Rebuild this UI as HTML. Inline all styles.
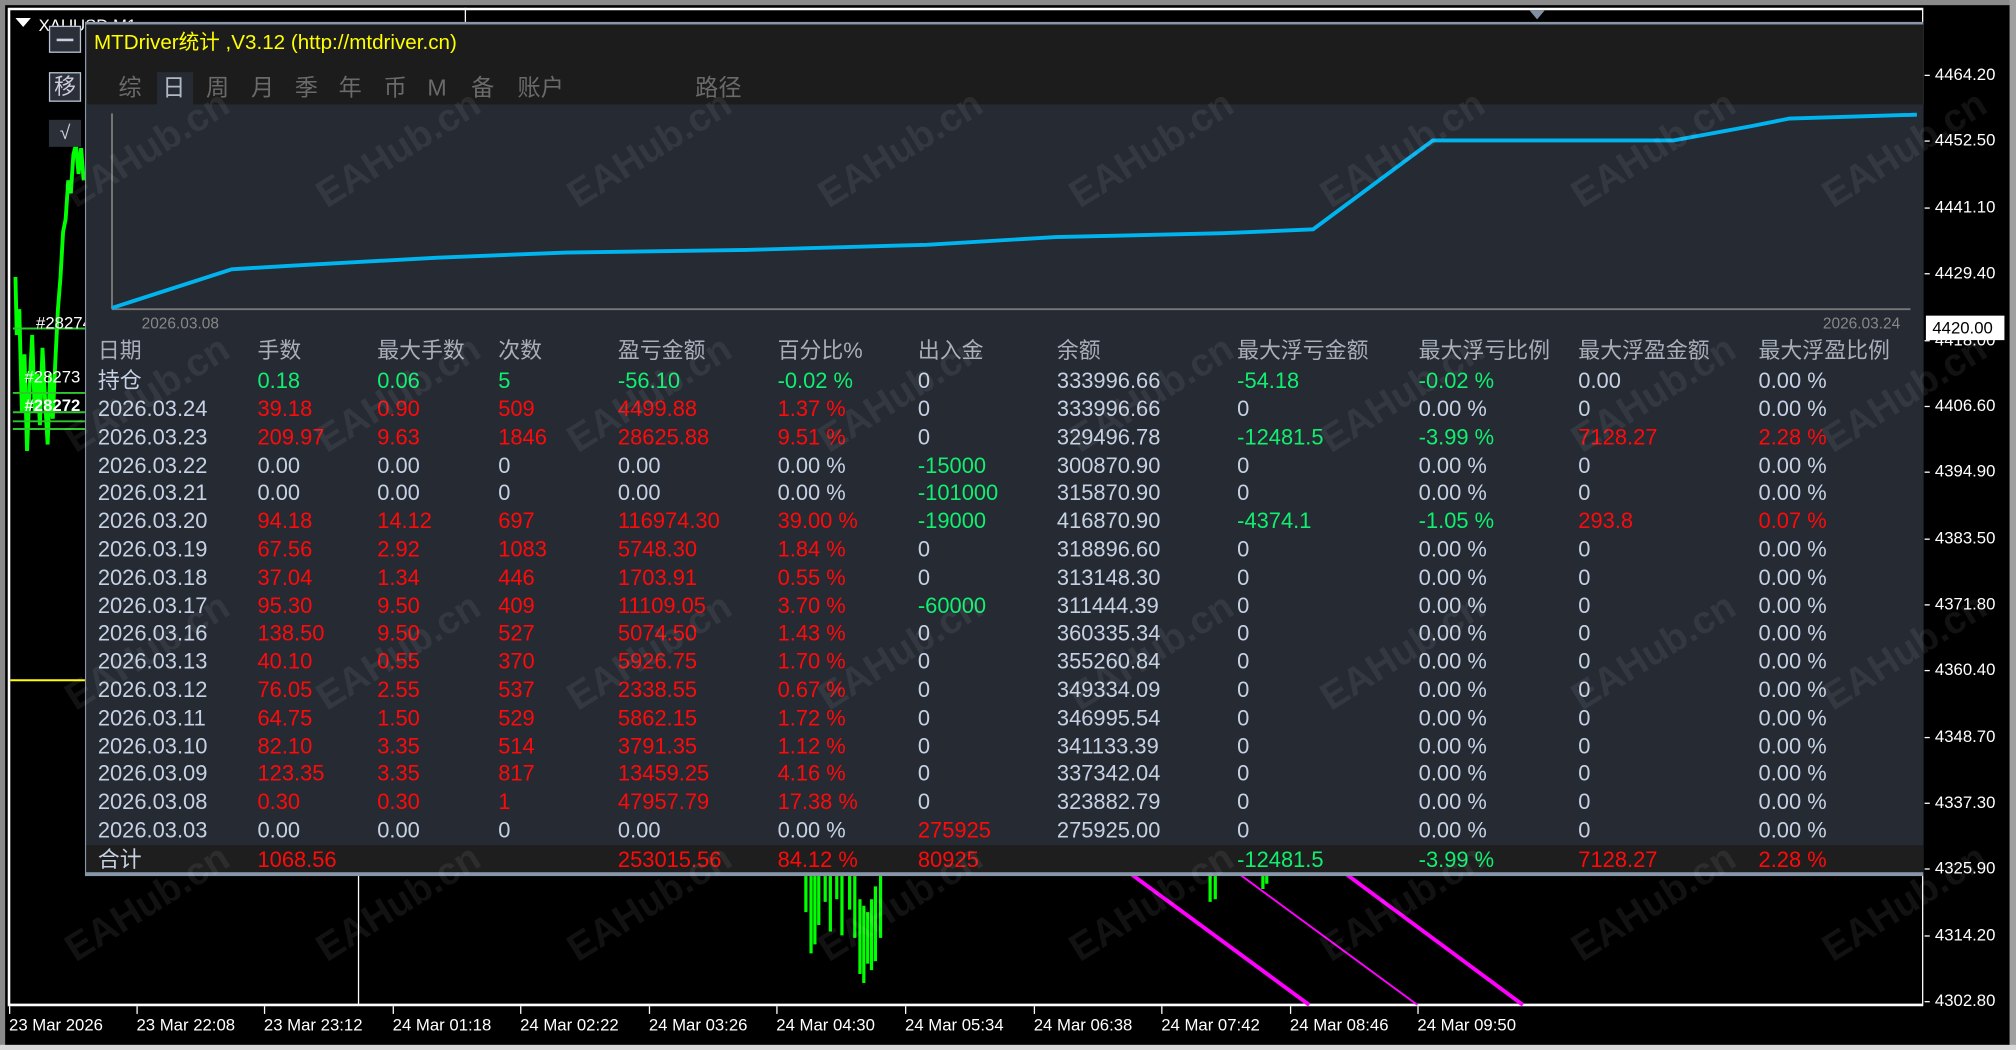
<!DOCTYPE html>
<html><head><meta charset="utf-8">
<style>
*{margin:0;padding:0;box-sizing:border-box}
html,body{width:2016px;height:1050px;overflow:hidden;background:#000}
#w{position:absolute;left:0;top:0;width:1566px;height:815px;transform-origin:0 0;transform:scale(1.28736,1.28834);background:#000;font-family:"Liberation Sans","Noto Sans CJK SC",sans-serif;overflow:hidden}
.a{position:absolute}
.t{position:absolute;white-space:nowrap;font-size:16px;line-height:18px}
.row{position:absolute;left:0;width:1427px;height:22px}
.row span{position:absolute;top:0;white-space:nowrap;font-size:17px;line-height:20px;color:#c6d2e4}
.r{color:#ff0a0a!important}.g{color:#10f070!important}.h{color:#a9afb8!important}
.c1{left:10px}.c2{left:134px}.c3{left:227px}.c4{left:321px}.c5{left:414px}.c6{left:538px}.c7{left:647px}.c8{left:755px}.c9{left:895px}.c10{left:1036px}.c11{left:1160px}.c12{left:1300px}
.px{position:absolute;left:1503px;color:#fff;font-size:13px;line-height:14px}
.px:before{content:"";position:absolute;left:-8px;top:7px;width:4px;height:1px;background:#fff}
.tm{position:absolute;top:789px;color:#fff;font-size:13px;line-height:14px}
.tk{position:absolute;top:781px;width:1px;height:6px;background:#fff}
.wm{position:absolute;color:rgba(255,255,255,0.07);font-size:30px;font-weight:bold;transform:rotate(-32deg);transform-origin:0 0;white-space:nowrap;pointer-events:none}
.tab{position:absolute;top:58px;color:#6a6a6a;font-size:18px;line-height:20px;white-space:nowrap}
</style></head><body><div id="w">
<div class="a" style="left:0;top:0;width:1566px;height:4px;background:#8a8a8a"></div>
<div class="a" style="left:0;top:0;width:4px;height:815px;background:#8a8a8a"></div>
<div class="a" style="left:1561px;top:0;width:5px;height:815px;background:#a0a0a0"></div>
<div class="a" style="left:0;top:811px;width:1566px;height:4px;background:#d8d8d8"></div>
<div class="a" style="left:6px;top:6px;width:1488px;height:775px;border:2px solid #fff;border-right-width:1px"></div>
<div class="a" style="left:361px;top:6px;width:1px;height:12px;background:#fff"></div>
<div class="a" style="left:278px;top:678px;width:1px;height:102px;background:#fff"></div>
<div class="a" style="left:1188px;top:8px;width:0;height:0;border-left:6px solid transparent;border-right:6px solid transparent;border-top:7px solid #8090a0"></div>
<svg class="a" style="left:0;top:0" width="70" height="560">
<polyline fill="none" stroke="#00ff00" stroke-width="3" points="12,215 13,260 15,240 17,320 19,275 21,350 23,300 25,260 27,320 29,290 31,330 33,270 35,310 37,345 39,290 41,325 43,280 45,240 47,215 49,180 51,170 53,140 55,150 57,120 59,112 61,135 63,115 65,140"/>
<line x1="10" y1="255" x2="66" y2="255" stroke="#2ec82e" stroke-width="1.5"/>
<line x1="10" y1="305" x2="66" y2="305" stroke="#2ec82e" stroke-width="1.5"/>
<line x1="10" y1="320" x2="66" y2="320" stroke="#2ec82e" stroke-width="1.5"/>
<line x1="10" y1="327" x2="66" y2="327" stroke="#2ec82e" stroke-width="1.5"/>
<line x1="10" y1="333" x2="66" y2="333" stroke="#2ec82e" stroke-width="1.5"/>
<line x1="8" y1="528" x2="66" y2="528" stroke="#ffff00" stroke-width="1.5"/>
</svg>
<div class="t" style="left:28px;top:242px;color:#fff;font-size:13px">#28274</div>
<div class="t" style="left:19px;top:284px;color:#fff;font-size:13px">#28273</div>
<div class="t" style="left:19px;top:306px;color:#fff;font-size:13px;font-weight:bold">#28272</div>
<div class="a" style="left:12px;top:14px;width:0;height:0;border-left:6px solid transparent;border-right:6px solid transparent;border-top:7px solid #fff"></div>
<div class="t" style="left:30px;top:11px;color:#fff;font-size:13px">XAUUSD,M1</div>
<div class="a" style="left:38px;top:20px;width:25px;height:21px;background:#2a2f38;border:1px solid #b8c4d4"><div class="a" style="left:5px;top:9px;width:13px;height:1.5px;background:#ccd"></div></div>
<div class="a" style="left:38px;top:56px;width:25px;height:23px;background:#2a2f38;border:1px solid #b8c4d4;color:#ccd;font-size:17px;line-height:21px;text-align:center">移</div>
<div class="a" style="left:38px;top:93px;width:25px;height:21px;background:#2a2f38;color:#ccd;font-size:15px;line-height:21px;text-align:center">√</div>
<svg class="a" style="left:0;top:678px" width="1200" height="110">
<g stroke="#00ff00" stroke-width="2.5">
<line x1="626" y1="0" x2="626" y2="30"/><line x1="630" y1="0" x2="630" y2="62"/><line x1="633" y1="0" x2="633" y2="55"/><line x1="636" y1="0" x2="636" y2="40"/><line x1="641" y1="0" x2="641" y2="22"/><line x1="645" y1="0" x2="645" y2="45"/><line x1="650" y1="0" x2="650" y2="20"/><line x1="654" y1="0" x2="654" y2="48"/><line x1="660" y1="0" x2="660" y2="28"/><line x1="664" y1="0" x2="664" y2="50"/><line x1="668" y1="20" x2="668" y2="78"/><line x1="671" y1="25" x2="671" y2="85"/><line x1="674" y1="30" x2="674" y2="70"/><line x1="677" y1="20" x2="677" y2="75"/><line x1="680" y1="10" x2="680" y2="68"/><line x1="684" y1="0" x2="684" y2="50"/>
<line x1="940" y1="0" x2="940" y2="22"/><line x1="944" y1="0" x2="944" y2="20"/><line x1="981" y1="0" x2="981" y2="12"/><line x1="984" y1="0" x2="984" y2="8"/>
</g>
<line x1="878" y1="0" x2="1017" y2="102" stroke="#ff00ff" stroke-width="3"/>
<line x1="962" y1="0" x2="1101" y2="102" stroke="#ff00ff" stroke-width="1.5"/>
<line x1="1045" y1="0" x2="1183" y2="102" stroke="#ff00ff" stroke-width="3"/>
</svg>
<div class="a" style="left:66px;top:17px;width:1428px;height:663px;background:#1c1c1c;border-top:2px solid #8796a8;border-left:1px solid #8796a8"></div>
<div class="a" style="left:67px;top:81px;width:1427px;height:576px;background:#252a33"></div>
<div class="a" style="left:67px;top:656px;width:1427px;height:22px;background:#1e1e1e"></div>
<div class="a" style="left:66px;top:677px;width:1428px;height:3px;background:#8796a8"></div>
<div class="t" style="left:73px;top:25px;color:#ffff00;font-size:16px">MTDriver统计 ,V3.12 (http://mtdriver.cn)</div>
<div class="a" style="left:122px;top:56px;width:28px;height:26px;background:#262b33"></div>
<div class="tab" style="left:92px">综</div>
<div class="tab" style="left:126px;color:#b0b8c4">日</div>
<div class="tab" style="left:160px">周</div>
<div class="tab" style="left:195px">月</div>
<div class="tab" style="left:229px">季</div>
<div class="tab" style="left:263px">年</div>
<div class="tab" style="left:298px">币</div>
<div class="tab" style="left:332px">M</div>
<div class="tab" style="left:366px">备</div>
<div class="tab" style="left:402px">账户</div>
<div class="tab" style="left:540px">路径</div>
<svg class="a" style="left:0;top:0" width="1500" height="260">
<line x1="87" y1="88" x2="87" y2="240" stroke="#777" stroke-width="1.5"/>
<line x1="87" y1="240" x2="1484" y2="240" stroke="#777" stroke-width="1.5"/>
<polyline fill="none" stroke="#00b4f0" stroke-width="3" points="87,239 180,209 230,206 340,200 440,196 580,194 720,190 820,184 950,181 1020,178 1113,109 1300,109 1360,98 1390,92 1489,89"/>
</svg>
<div class="t" style="left:110px;top:242px;color:#888;font-size:12px">2026.03.08</div>
<div class="t" style="left:1416px;top:242px;color:#888;font-size:12px">2026.03.24</div>
<div class="a" style="left:66px;top:-1px">
<div class="row" style="top:264px"><span class="c1 h">日期</span><span class="c2 h">手数</span><span class="c3 h">最大手数</span><span class="c4 h">次数</span><span class="c5 h">盈亏金额</span><span class="c6 h">百分比%</span><span class="c7 h">出入金</span><span class="c8 h">余额</span><span class="c9 h">最大浮亏金额</span><span class="c10 h">最大浮亏比例</span><span class="c11 h">最大浮盈金额</span><span class="c12 h">最大浮盈比例</span></div>
<div class="row" style="top:287px"><span class="c1">持仓</span><span class="c2 g">0.18</span><span class="c3 g">0.06</span><span class="c4 g">5</span><span class="c5 g">-56.10</span><span class="c6 g">-0.02 %</span><span class="c7">0</span><span class="c8">333996.66</span><span class="c9 g">-54.18</span><span class="c10 g">-0.02 %</span><span class="c11">0.00</span><span class="c12">0.00 %</span></div>
<div class="row" style="top:309px"><span class="c1">2026.03.24</span><span class="c2 r">39.18</span><span class="c3 r">0.90</span><span class="c4 r">509</span><span class="c5 r">4499.88</span><span class="c6 r">1.37 %</span><span class="c7">0</span><span class="c8">333996.66</span><span class="c9">0</span><span class="c10">0.00 %</span><span class="c11">0</span><span class="c12">0.00 %</span></div>
<div class="row" style="top:331px"><span class="c1">2026.03.23</span><span class="c2 r">209.97</span><span class="c3 r">9.63</span><span class="c4 r">1846</span><span class="c5 r">28625.88</span><span class="c6 r">9.51 %</span><span class="c7">0</span><span class="c8">329496.78</span><span class="c9 g">-12481.5</span><span class="c10 g">-3.99 %</span><span class="c11 r">7128.27</span><span class="c12 r">2.28 %</span></div>
<div class="row" style="top:353px"><span class="c1">2026.03.22</span><span class="c2">0.00</span><span class="c3">0.00</span><span class="c4">0</span><span class="c5">0.00</span><span class="c6">0.00 %</span><span class="c7 g">-15000</span><span class="c8">300870.90</span><span class="c9">0</span><span class="c10">0.00 %</span><span class="c11">0</span><span class="c12">0.00 %</span></div>
<div class="row" style="top:374px"><span class="c1">2026.03.21</span><span class="c2">0.00</span><span class="c3">0.00</span><span class="c4">0</span><span class="c5">0.00</span><span class="c6">0.00 %</span><span class="c7 g">-101000</span><span class="c8">315870.90</span><span class="c9">0</span><span class="c10">0.00 %</span><span class="c11">0</span><span class="c12">0.00 %</span></div>
<div class="row" style="top:396px"><span class="c1">2026.03.20</span><span class="c2 r">94.18</span><span class="c3 r">14.12</span><span class="c4 r">697</span><span class="c5 r">116974.30</span><span class="c6 r">39.00 %</span><span class="c7 g">-19000</span><span class="c8">416870.90</span><span class="c9 g">-4374.1</span><span class="c10 g">-1.05 %</span><span class="c11 r">293.8</span><span class="c12 r">0.07 %</span></div>
<div class="row" style="top:418px"><span class="c1">2026.03.19</span><span class="c2 r">67.56</span><span class="c3 r">2.92</span><span class="c4 r">1083</span><span class="c5 r">5748.30</span><span class="c6 r">1.84 %</span><span class="c7">0</span><span class="c8">318896.60</span><span class="c9">0</span><span class="c10">0.00 %</span><span class="c11">0</span><span class="c12">0.00 %</span></div>
<div class="row" style="top:440px"><span class="c1">2026.03.18</span><span class="c2 r">37.04</span><span class="c3 r">1.34</span><span class="c4 r">446</span><span class="c5 r">1703.91</span><span class="c6 r">0.55 %</span><span class="c7">0</span><span class="c8">313148.30</span><span class="c9">0</span><span class="c10">0.00 %</span><span class="c11">0</span><span class="c12">0.00 %</span></div>
<div class="row" style="top:462px"><span class="c1">2026.03.17</span><span class="c2 r">95.30</span><span class="c3 r">9.50</span><span class="c4 r">409</span><span class="c5 r">11109.05</span><span class="c6 r">3.70 %</span><span class="c7 g">-60000</span><span class="c8">311444.39</span><span class="c9">0</span><span class="c10">0.00 %</span><span class="c11">0</span><span class="c12">0.00 %</span></div>
<div class="row" style="top:483px"><span class="c1">2026.03.16</span><span class="c2 r">138.50</span><span class="c3 r">9.50</span><span class="c4 r">527</span><span class="c5 r">5074.50</span><span class="c6 r">1.43 %</span><span class="c7">0</span><span class="c8">360335.34</span><span class="c9">0</span><span class="c10">0.00 %</span><span class="c11">0</span><span class="c12">0.00 %</span></div>
<div class="row" style="top:505px"><span class="c1">2026.03.13</span><span class="c2 r">40.10</span><span class="c3 r">0.55</span><span class="c4 r">370</span><span class="c5 r">5926.75</span><span class="c6 r">1.70 %</span><span class="c7">0</span><span class="c8">355260.84</span><span class="c9">0</span><span class="c10">0.00 %</span><span class="c11">0</span><span class="c12">0.00 %</span></div>
<div class="row" style="top:527px"><span class="c1">2026.03.12</span><span class="c2 r">76.05</span><span class="c3 r">2.55</span><span class="c4 r">537</span><span class="c5 r">2338.55</span><span class="c6 r">0.67 %</span><span class="c7">0</span><span class="c8">349334.09</span><span class="c9">0</span><span class="c10">0.00 %</span><span class="c11">0</span><span class="c12">0.00 %</span></div>
<div class="row" style="top:549px"><span class="c1">2026.03.11</span><span class="c2 r">64.75</span><span class="c3 r">1.50</span><span class="c4 r">529</span><span class="c5 r">5862.15</span><span class="c6 r">1.72 %</span><span class="c7">0</span><span class="c8">346995.54</span><span class="c9">0</span><span class="c10">0.00 %</span><span class="c11">0</span><span class="c12">0.00 %</span></div>
<div class="row" style="top:571px"><span class="c1">2026.03.10</span><span class="c2 r">82.10</span><span class="c3 r">3.35</span><span class="c4 r">514</span><span class="c5 r">3791.35</span><span class="c6 r">1.12 %</span><span class="c7">0</span><span class="c8">341133.39</span><span class="c9">0</span><span class="c10">0.00 %</span><span class="c11">0</span><span class="c12">0.00 %</span></div>
<div class="row" style="top:592px"><span class="c1">2026.03.09</span><span class="c2 r">123.35</span><span class="c3 r">3.35</span><span class="c4 r">817</span><span class="c5 r">13459.25</span><span class="c6 r">4.16 %</span><span class="c7">0</span><span class="c8">337342.04</span><span class="c9">0</span><span class="c10">0.00 %</span><span class="c11">0</span><span class="c12">0.00 %</span></div>
<div class="row" style="top:614px"><span class="c1">2026.03.08</span><span class="c2 r">0.30</span><span class="c3 r">0.30</span><span class="c4 r">1</span><span class="c5 r">47957.79</span><span class="c6 r">17.38 %</span><span class="c7">0</span><span class="c8">323882.79</span><span class="c9">0</span><span class="c10">0.00 %</span><span class="c11">0</span><span class="c12">0.00 %</span></div>
<div class="row" style="top:636px"><span class="c1">2026.03.03</span><span class="c2">0.00</span><span class="c3">0.00</span><span class="c4">0</span><span class="c5">0.00</span><span class="c6">0.00 %</span><span class="c7 r">275925</span><span class="c8">275925.00</span><span class="c9">0</span><span class="c10">0.00 %</span><span class="c11">0</span><span class="c12">0.00 %</span></div>
<div class="row" style="top:659px"><span class="c1">合计</span><span class="c2 r">1068.56</span><span class="c5 r">253015.56</span><span class="c6 r">84.12 %</span><span class="c7 r">80925</span><span class="c9 g">-12481.5</span><span class="c10 g">-3.99 %</span><span class="c11 r">7128.27</span><span class="c12 r">2.28 %</span></div>
</div>
<div class="px" style="top:51px">4464.20</div>
<div class="px" style="top:102px">4452.50</div>
<div class="px" style="top:154px">4441.10</div>
<div class="px" style="top:205px">4429.40</div>
<div class="px" style="top:257px">4418.00</div>
<div class="a" style="left:1496px;top:245px;width:61px;height:19px;background:#fff;color:#000;font-size:13px;line-height:19px;padding-left:5px">4420.00</div>
<div class="px" style="top:308px">4406.60</div>
<div class="px" style="top:359px">4394.90</div>
<div class="px" style="top:411px">4383.50</div>
<div class="px" style="top:462px">4371.80</div>
<div class="px" style="top:513px">4360.40</div>
<div class="px" style="top:565px">4348.70</div>
<div class="px" style="top:616px">4337.30</div>
<div class="px" style="top:667px">4325.90</div>
<div class="px" style="top:719px">4314.20</div>
<div class="px" style="top:770px">4302.80</div>
<div class="tk" style="left:7px"></div><div class="tk" style="left:106px"></div><div class="tk" style="left:205px"></div><div class="tk" style="left:305px"></div><div class="tk" style="left:404px"></div><div class="tk" style="left:504px"></div><div class="tk" style="left:603px"></div><div class="tk" style="left:703px"></div><div class="tk" style="left:803px"></div><div class="tk" style="left:902px"></div><div class="tk" style="left:1002px"></div><div class="tk" style="left:1101px"></div>
<div class="tm" style="left:7px">23 Mar 2026</div>
<div class="tm" style="left:106px">23 Mar 22:08</div>
<div class="tm" style="left:205px">23 Mar 23:12</div>
<div class="tm" style="left:305px">24 Mar 01:18</div>
<div class="tm" style="left:404px">24 Mar 02:22</div>
<div class="tm" style="left:504px">24 Mar 03:26</div>
<div class="tm" style="left:603px">24 Mar 04:30</div>
<div class="tm" style="left:703px">24 Mar 05:34</div>
<div class="tm" style="left:803px">24 Mar 06:38</div>
<div class="tm" style="left:902px">24 Mar 07:42</div>
<div class="tm" style="left:1002px">24 Mar 08:46</div>
<div class="tm" style="left:1101px">24 Mar 09:50</div>
<div class="wm" style="left:45px;top:140px">EAHub.cn</div><div class="wm" style="left:240px;top:140px">EAHub.cn</div><div class="wm" style="left:435px;top:140px">EAHub.cn</div><div class="wm" style="left:630px;top:140px">EAHub.cn</div><div class="wm" style="left:825px;top:140px">EAHub.cn</div><div class="wm" style="left:1020px;top:140px">EAHub.cn</div><div class="wm" style="left:1215px;top:140px">EAHub.cn</div><div class="wm" style="left:1410px;top:140px">EAHub.cn</div>
<div class="wm" style="left:45px;top:330px">EAHub.cn</div><div class="wm" style="left:240px;top:330px">EAHub.cn</div><div class="wm" style="left:435px;top:330px">EAHub.cn</div><div class="wm" style="left:630px;top:330px">EAHub.cn</div><div class="wm" style="left:825px;top:330px">EAHub.cn</div><div class="wm" style="left:1020px;top:330px">EAHub.cn</div><div class="wm" style="left:1215px;top:330px">EAHub.cn</div><div class="wm" style="left:1410px;top:330px">EAHub.cn</div>
<div class="wm" style="left:45px;top:530px">EAHub.cn</div><div class="wm" style="left:240px;top:530px">EAHub.cn</div><div class="wm" style="left:435px;top:530px">EAHub.cn</div><div class="wm" style="left:630px;top:530px">EAHub.cn</div><div class="wm" style="left:825px;top:530px">EAHub.cn</div><div class="wm" style="left:1020px;top:530px">EAHub.cn</div><div class="wm" style="left:1215px;top:530px">EAHub.cn</div><div class="wm" style="left:1410px;top:530px">EAHub.cn</div>
<div class="wm" style="left:45px;top:725px">EAHub.cn</div><div class="wm" style="left:240px;top:725px">EAHub.cn</div><div class="wm" style="left:435px;top:725px">EAHub.cn</div><div class="wm" style="left:630px;top:725px">EAHub.cn</div><div class="wm" style="left:825px;top:725px">EAHub.cn</div><div class="wm" style="left:1020px;top:725px">EAHub.cn</div><div class="wm" style="left:1215px;top:725px">EAHub.cn</div><div class="wm" style="left:1410px;top:725px">EAHub.cn</div>
</div></body></html>
